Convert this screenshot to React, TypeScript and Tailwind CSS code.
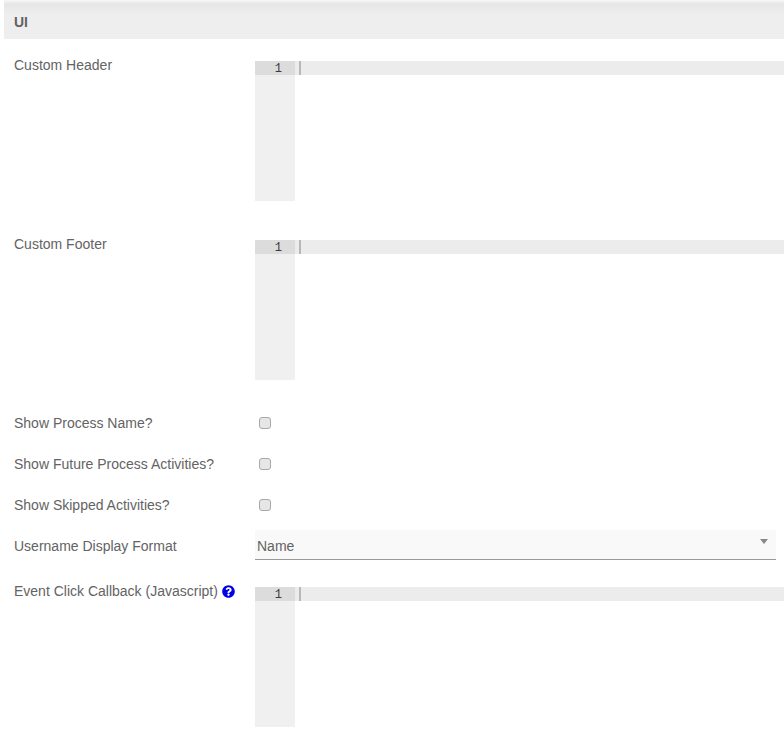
import { FaQuestionCircle } from "react-icons/fa";

function Editor() {
  return (
    <div className="flex h-[140px] min-w-0 flex-1 overflow-hidden bg-white font-['Liberation_Mono',monospace] text-[12px] leading-[14px]">
      <div className="h-full w-10 shrink-0 bg-[#f0f0f0]">
        <div className="h-3.5 bg-[#dcdcdc] pr-[13px] pt-px text-right text-[#3a3a3a]">1</div>
      </div>
      <div className="flex-1">
        <div className="h-3.5 bg-[#ececec] pl-1">
          <div className="h-3.5 w-0.5 bg-[#b8b8b8]" />
        </div>
      </div>
    </div>
  );
}

function Row({ label, help, children, className, labelClass }: { label: string; help?: boolean; children: React.ReactNode; className: string; labelClass?: string }) {
  return (
    <div className={`flex ${className}`}>
      <label className={`flex w-[241px] shrink-0 items-start gap-1 text-[14px] leading-5 text-[#636363] ${labelClass ?? ""}`}>
        {label}
        {help && <FaQuestionCircle className="mt-1 h-[13px] w-[13px] shrink-0 text-[#0000e6]" />}
      </label>
      {children}
    </div>
  );
}

function Checkbox() {
  return <span className="mt-1 ml-1 block h-3 w-3 rounded-[3px] border border-[#a8a8a8] bg-[#e6e6e6]" />;
}

export default function App() {
  return (
    <div className="h-[734px] overflow-hidden bg-white pl-1 font-['Liberation_Sans',Arial,sans-serif]">
      <div className="flex h-[39px] items-center bg-[linear-gradient(#f8f8f8_0,#e6e6e6_4px,#eeeeee_14px)] pl-2.5 pt-[6px] text-[14px] font-bold text-[#636363]">
        UI
      </div>
      <div className="pl-2.5">
        <Row label="Custom Header" className="mt-[22px]" labelClass="-mt-1.5"><Editor /></Row>
        <Row label="Custom Footer" className="mt-[39px]" labelClass="-mt-1.5"><Editor /></Row>
        <Row label="Show Process Name?" className="mt-[33px] h-5"><Checkbox /></Row>
        <Row label="Show Future Process Activities?" className="mt-[21px] h-5"><Checkbox /></Row>
        <Row label="Show Skipped Activities?" className="mt-[21px] h-5"><Checkbox /></Row>
        <Row label="Username Display Format" className="mt-[15px]" labelClass="mt-[6px]">
          <div className="relative mr-2 flex h-[30px] flex-1 items-center border-b border-[#999999] bg-[#f9f9f9] pl-0.5 pt-1 text-[14px] text-[#636363]">
            Name
            <span className="absolute right-2 top-[9px] h-0 w-0 border-x-[4px] border-t-[5px] border-x-transparent border-t-[#888888]" />
          </div>
        </Row>
        <Row label="Event Click Callback (Javascript)" help className="mt-[27px]" labelClass="-mt-1.5"><Editor /></Row>
      </div>
    </div>
  );
}
